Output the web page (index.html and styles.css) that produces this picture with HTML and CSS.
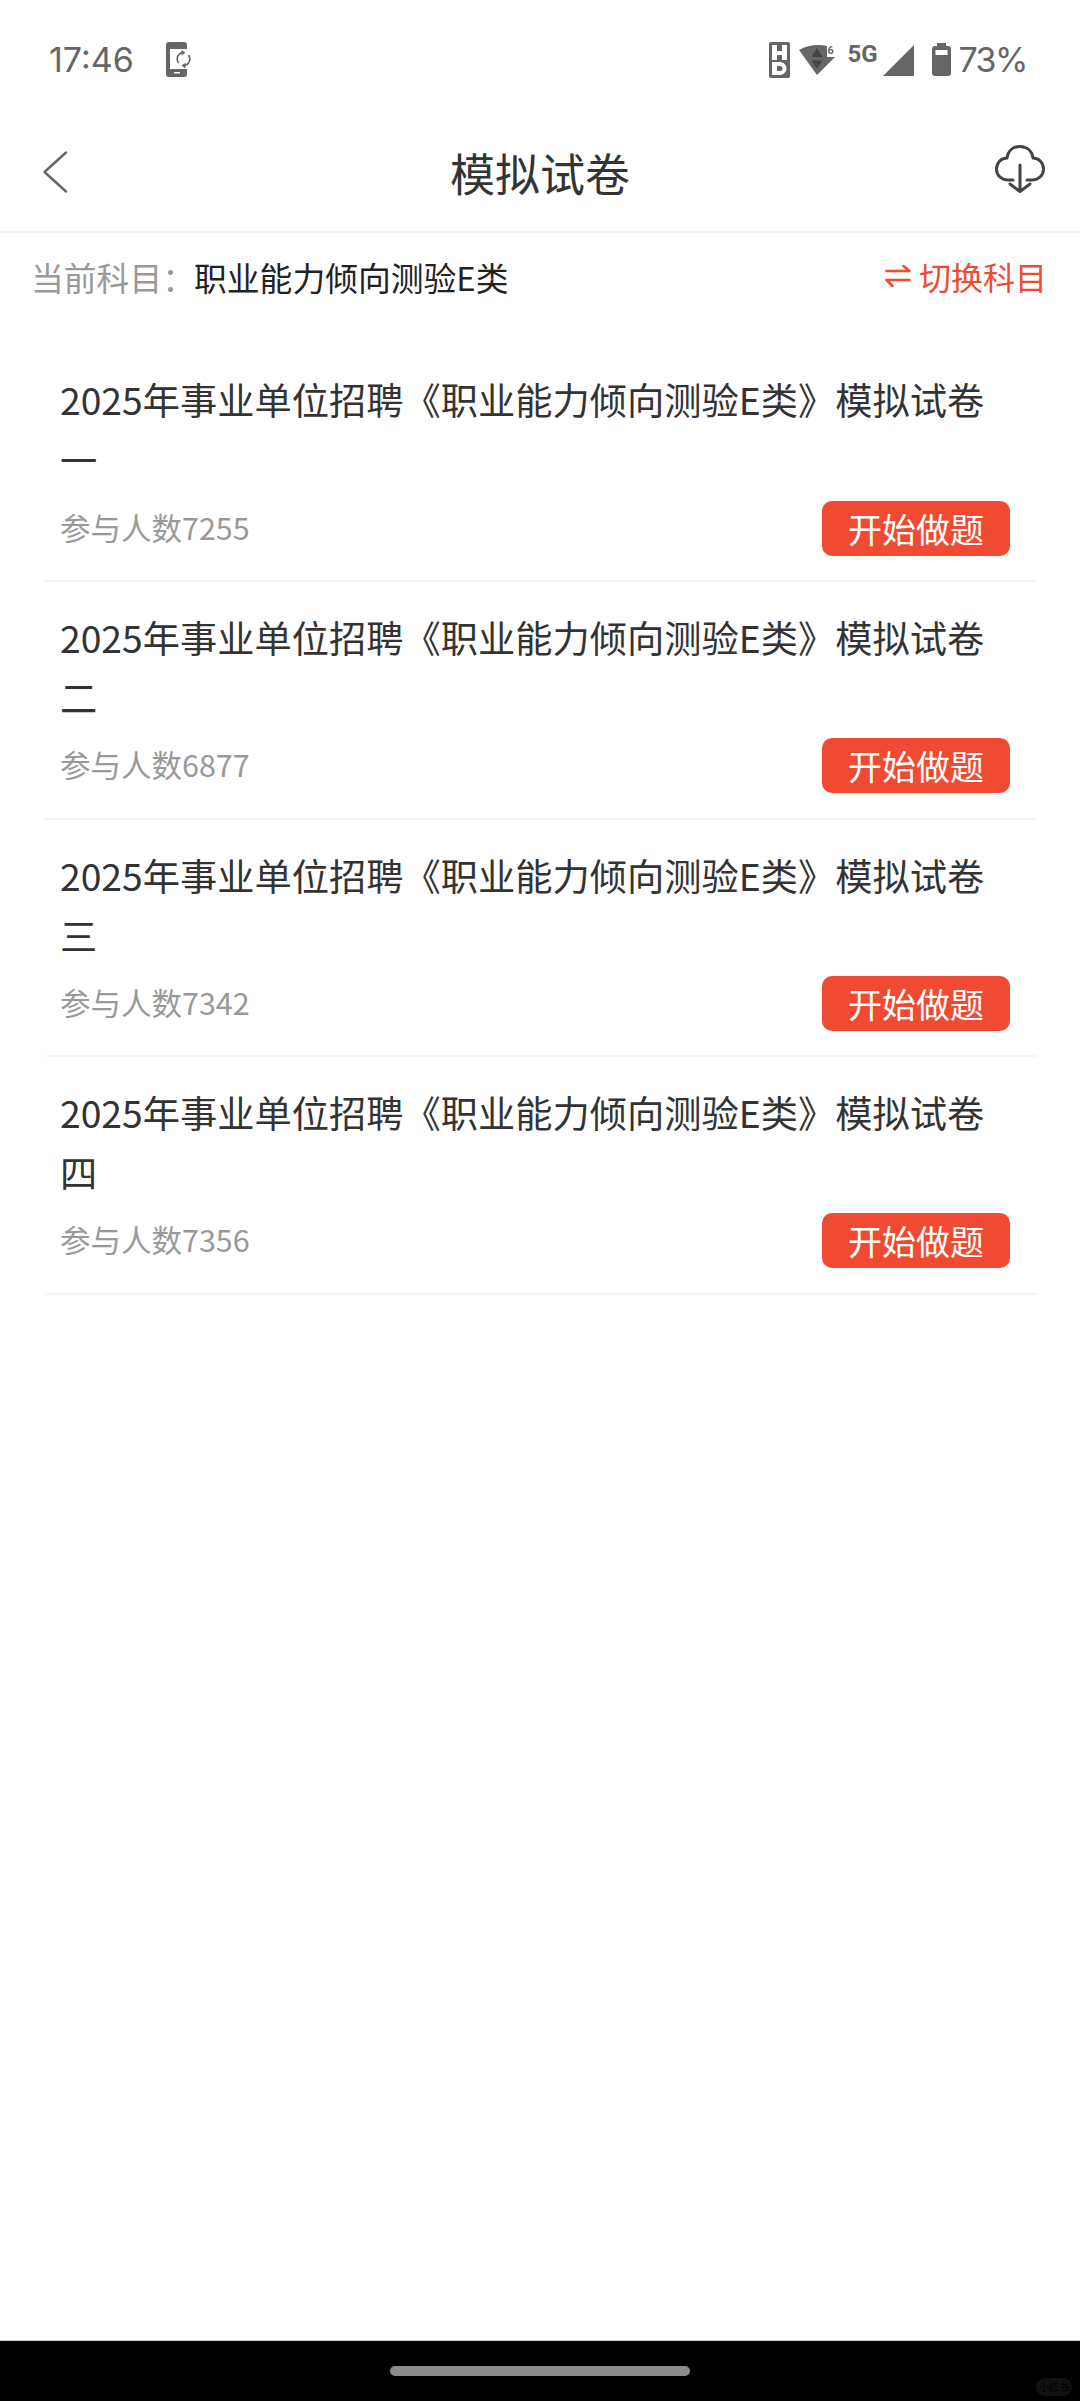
FILE: index.html
```html
<!DOCTYPE html>
<html lang="zh">
<head>
<meta charset="utf-8">
<title>模拟试卷</title>
<link rel="stylesheet" href="styles.css">
</head>
<body>
<div class="page">
  <div class="status">
    <div class="status-left">
      <span class="time">17:46</span>
      <svg class="ic-phone" viewBox="0 0 26 35"><path fill="#666" fill-rule="evenodd" d="M3 0h15a3 3 0 0 1 3 3v4H4v20h17v5a3 3 0 0 1-3 3H3a3 3 0 0 1-3-3V3a3 3 0 0 1 3-3zM8 30v1.500h6V30z"/><path fill="none" stroke="#666" stroke-width="1.500" d="M16 10.500a6.800 6.800 0 0 0-3.500 10.500M19 23.500a6.800 6.800 0 0 0 3.500-10.500"/><path fill="#666" d="M15.500 8l4 2.800-4 2.800zM19.500 20.800l-4 2.800 4 2.800z"/></svg>
    </div>
    <div class="status-right">
      <svg class="ic-hd" viewBox="0 0 21 36"><rect width="21" height="36" rx="2" fill="#666"/><path fill="#fff" fill-rule="evenodd" d="M3 3h5v6h5V3h5v15h-5v-5H8v5H3zM3 20h8a6.500 6.500 0 0 1 0 13H3zM8 24v5h3a2.500 2.500 0 0 0 0-5z"/></svg>
      <svg class="ic-wifi" viewBox="0 0 36 30"><path fill="#666" d="M0 5C8 0 20-1 28 1v11h8L18 30z"/><path fill="#444" d="M18 3l5.500 9h-11zM12.500 15.500h11L18 23.500z"/></svg>
      <span class="wifi6">6</span>
      <span class="fiveg">5G</span>
      <svg class="ic-signal" viewBox="0 0 31 31"><path fill="#666" d="M31 0v31H0z"/></svg>
      <svg class="ic-batt" viewBox="0 0 19 33"><path fill="#666" fill-rule="evenodd" d="M5 0h9v3h2a3 3 0 0 1 3 3v24a3 3 0 0 1-3 3H3a3 3 0 0 1-3-3V6a3 3 0 0 1 3-3h2zM3.500 7v5h12V7z"/></svg>
      <span class="pct">73%</span>
    </div>
  </div>

  <header class="nav">
    <svg class="ic-back" viewBox="0 0 24 42"><path fill="none" stroke="#666" stroke-width="2.400" stroke-linecap="round" stroke-linejoin="round" d="M23 1.500L1.500 21 23 40.500"/></svg>
    <h1 class="nav-title">模拟试卷</h1>
    <svg class="ic-cloud" viewBox="0 0 50 48"><path fill="none" stroke="#444" stroke-width="3" stroke-linecap="round" stroke-linejoin="round" d="M18 35H13C6 35 1.500 30 1.500 24S6 13 12 13C13 6 18 1.500 25 1.500S37 6 38 13C44 13 48.500 18 48.500 24S44 35 37 35H32M25 20V46.500M15 39l10 7.500 10-7.500"/></svg>
  </header>

  <div class="subject">
    <div class="subject-left"><span class="subject-label">当前科目：</span><span class="subject-name">职业能力倾向测验E类</span></div>
    <div class="subject-switch">
      <svg class="ic-swap" viewBox="0 0 26 22"><path fill="none" stroke="#f04b32" stroke-width="2.600" stroke-linecap="round" stroke-linejoin="round" d="M1.500 6h23l-6-5M24.500 15h-23l6 6"/></svg>
      <span class="switch-label">切换科目</span>
    </div>
  </div>

  <main class="list">
    <article class="item item-first">
      <div class="item-title">2025年事业单位招聘《职业能力倾向测验E类》模拟试卷一</div>
      <div class="item-foot item-foot-first"><span class="count">参与人数7255</span><span class="btn">开始做题</span></div>
    </article>
    <article class="item">
      <div class="item-title">2025年事业单位招聘《职业能力倾向测验E类》模拟试卷二</div>
      <div class="item-foot"><span class="count">参与人数6877</span><span class="btn">开始做题</span></div>
    </article>
    <article class="item">
      <div class="item-title">2025年事业单位招聘《职业能力倾向测验E类》模拟试卷三</div>
      <div class="item-foot"><span class="count">参与人数7342</span><span class="btn">开始做题</span></div>
    </article>
    <article class="item">
      <div class="item-title">2025年事业单位招聘《职业能力倾向测验E类》模拟试卷四</div>
      <div class="item-foot"><span class="count">参与人数7356</span><span class="btn">开始做题</span></div>
    </article>
  </main>

  <footer class="navbar">
    <div class="pill"></div>
    <span class="mark">小红书</span>
  </footer>
</div>
</body>
</html>
```
FILE: styles.css
```css
* { box-sizing: border-box; margin: 0; padding: 0; }
html, body { width: 1080px; height: 2401px; background: #fff; overflow: hidden; }
body { font-family: "Noto Sans CJK SC", "Noto Sans", sans-serif; }
.page { width: 1080px; height: 2401px; display: flex; flex-direction: column; }

.status { height: 120px; flex: none; display: flex; justify-content: space-between; align-items: flex-start; padding: 41px 53px 0 49px; color: #666; }
.status-left { display: flex; align-items: flex-start; }
.time { font-family: "Inter", "Roboto", sans-serif; font-size: 34px; line-height: 38px; width: 117px; }
.ic-phone { width: 26px; height: 35px; margin-top: 1px; }
.status-right { display: flex; align-items: flex-start; position: relative; height: 38px; }
.ic-hd { width: 21px; height: 36px; margin: 1px 9px 0 0; }
.ic-wifi { width: 36px; height: 30px; margin: 4px 12px 0 0; }
.wifi6 { position: absolute; left: 58px; top: 3px; font: 700 11px/14px "Roboto", sans-serif; color: #666; }
.fiveg { font: 700 24px/26px "Roboto", sans-serif; width: 29px; margin-right: 7px; }
.ic-signal { width: 31px; height: 31px; margin: 4px 18px 0 0; }
.ic-batt { width: 19px; height: 33px; margin: 2px 7px 0 0; }
.pct { font-family: "Inter", "Roboto", sans-serif; font-size: 34px; line-height: 38px; letter-spacing: -1.500px; }

.nav { height: 113px; flex: none; display: flex; align-items: center; justify-content: space-between; padding: 0 35px 0 43px; border-bottom: 2px solid #f2f2f2; position: relative; }
.ic-back { width: 24px; height: 42px; margin-top: -7px; }
.nav-title { position: absolute; left: 0; right: 0; top: 23px; text-align: center; font-size: 45px; line-height: 60px; font-weight: 400; color: #333; }
.ic-cloud { width: 50px; height: 48px; margin-top: -14px; }

.subject { height: 80px; flex: none; display: flex; align-items: center; justify-content: space-between; padding: 6px 33px 0 31px; font-size: 32.800px; }
.subject-left { display: flex; align-items: center; }
.subject-label { color: #999; width: 163px; white-space: nowrap; }
.subject-name { color: #222; }
.subject-switch { display: flex; align-items: center; color: #f04b32; gap: 8px; }
.switch-label { font-size: 32px; }
.ic-swap { width: 26px; height: 22px; }

.list { flex: 1; padding: 0 44px 0 45px; margin-top: 26px; }
.item { height: 237.500px; border-bottom: 2px solid #f5f5f5; padding: 25px 17px 0 15px; }
.item-first { height: 243px; padding-top: 30px; }
.item-title { font-size: 37.250px; line-height: 60px; color: #333; height: 120px; }
.item-foot { display: flex; align-items: center; justify-content: space-between; margin-top: 11px; padding-right: 9px; }
.item-foot-first { margin-top: 12px; }
.count { font-size: 30.500px; color: #999; margin-bottom: 3px; }
.btn { width: 188px; height: 55px; background: #f04b32; color: #fff; border-radius: 10px; font-size: 34px; line-height: 55px; text-align: center; }

.navbar { height: 61px; flex: none; background: #000; position: relative; display: flex; justify-content: center; align-items: center; border-top: 1px solid #ccc; }
.pill { width: 300px; height: 10px; border-radius: 5px; background: #8c8c8c; }
.mark { position: absolute; right: 8px; bottom: 5px; width: 36px; height: 18px; border-radius: 9px; background: #111; color: #000; font-size: 10px; line-height: 18px; text-align: center; }
```
